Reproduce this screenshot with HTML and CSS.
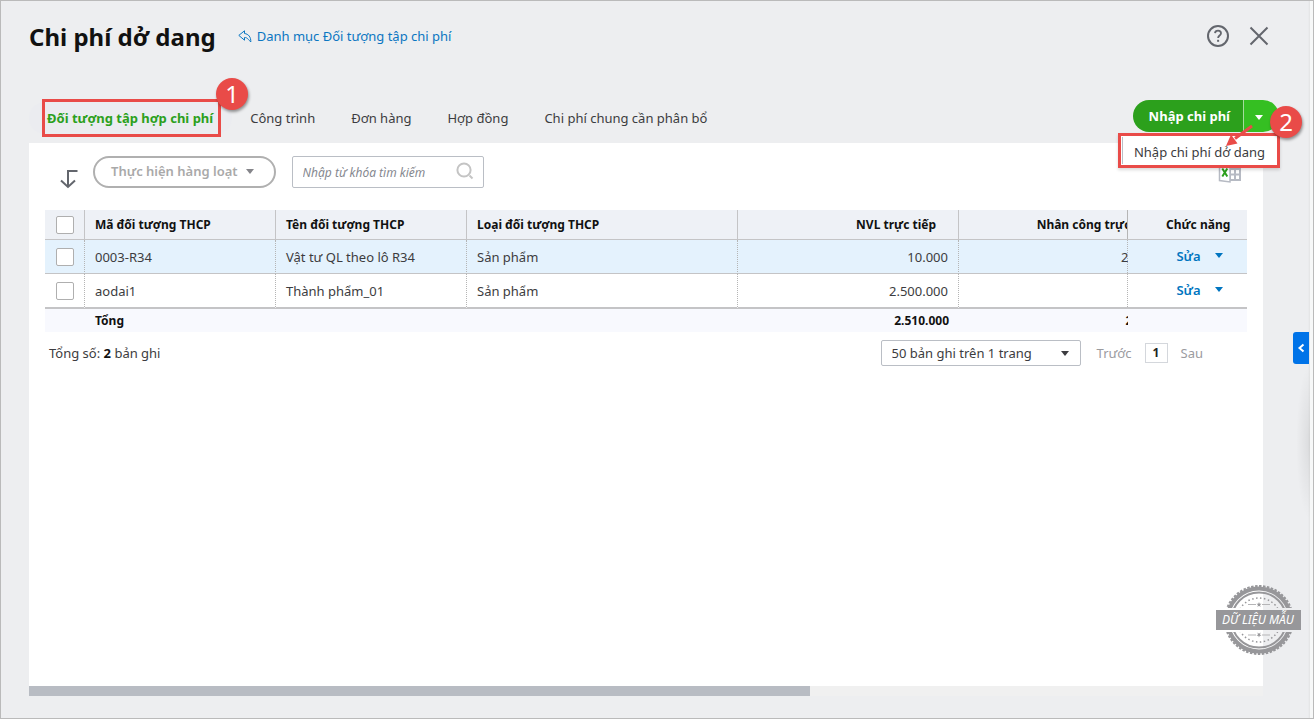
FILE: index.html
```html
<!DOCTYPE html>
<html lang="vi">
<head>
    <meta charset="UTF-8">
    <meta name="viewport" content="width=device-width, initial-scale=1.0">
    <title>Chi phí dở dang</title>
    <link rel="stylesheet" href="styles.css">
</head>
<body>
    <div class="window">
        <header class="page-header">
            <h1>Chi phí dở dang</h1>
            <a class="back-link" href="#">
                <svg width="14" height="13" viewBox="0 0 14 13" fill="none" stroke="currentColor" stroke-linejoin="round"><path d="M6.500 .8 .8 5.400l5.700 4.800V7.500c2 0 2.500.3 6.300 4.500C13 7 10.500 4 6.500 3.500z"/></svg>
                Danh mục Đối tượng tập chi phí
            </a>
            <div class="header-icons">
                <button class="icon-btn" aria-label="Trợ giúp">
                    <svg width="24" height="24" viewBox="0 0 24 24" fill="none" stroke="currentColor" stroke-width="2"><circle cx="12" cy="12" r="10"/><path d="M9 9.200c.2-1.700 1.400-2.500 3-2.500 1.800 0 3 1 3 2.600 0 2.200-2.900 2.300-2.900 4.600" stroke-width="1.800"/><path d="M11.100 15.800h2v2h-2z" fill="currentColor" stroke="none"/></svg>
                </button>
                <button class="icon-btn" aria-label="Đóng">
                    <svg width="24" height="24" viewBox="0 0 24 24" fill="none" stroke="currentColor" stroke-width="2"><path d="m3.500 3.500 17 17M20.500 3.500l-17 17"/></svg>
                </button>
            </div>
        </header>

        <div class="tab-bar">
            <nav class="tabs">
                <a class="tab active" href="#">Đối tượng tập hợp chi phí<span class="mark-tab"></span><span class="badge badge-one">1</span></a>
                <a class="tab" href="#">Công trình</a>
                <a class="tab" href="#">Đơn hàng</a>
                <a class="tab" href="#">Hợp đồng</a>
                <a class="tab" href="#">Chi phí chung cần phân bổ</a>
            </nav>
            <div class="split-button">
                <button class="main-btn">Nhập chi phí</button>
                <button class="drop-btn" aria-label="Mở danh sách"><span class="caret"></span></button>
                <div class="menu">
                    <button class="menu-item">Nhập chi phí dở dang</button>
                </div>
                <svg class="arrow" width="30" height="26" viewBox="0 0 30 26"><path d="M27 2 10 14.500" stroke="#e94b48" stroke-width="3"/><path d="m1 22 5-11.500 6.500 9z" fill="#e94b48"/></svg>
                <span class="badge badge-two">2</span>
            </div>
        </div>

        <main class="content">
            <div class="toolbar">
                <svg class="down-arrow" width="20" height="20" viewBox="0 0 20 20" fill="none" stroke="#63666d" stroke-width="2"><path d="M18.500 2H9v16M2 11.500l7 6.500 7-6.500"/></svg>
                <button class="batch-btn" disabled>Thực hiện hàng loạt <span class="caret"></span></button>
                <div class="search">
                    <input type="text" placeholder="Nhập từ khóa tìm kiếm" aria-label="Nhập từ khóa tìm kiếm">
                    <svg width="18" height="18" viewBox="0 0 18 18" fill="none" stroke="#c4c4c4" stroke-width="2"><circle cx="8" cy="8" r="6.600"/><path d="m13.500 13.500 3 3"/></svg>
                </div>
                <button class="excel-btn" aria-label="Xuất Excel">
                    <svg width="24" height="24" viewBox="0 0 24 24"><path d="M12 4h10v16H12z" fill="none" stroke="#b6bac3" stroke-width="2"/><path d="M12 9h10M12 14.500h10M17 4v16" stroke="#b6bac3" stroke-width="2"/><path d="M1.500 3.500 12 2v20L1.500 20.500z" fill="#fff" stroke="#b6bac3" stroke-width="1.500"/><path d="m4.300 8.500 5 8M9.300 8.500l-5 8" stroke="#2ca01c" stroke-width="2"/></svg>
                </button>
            </div>

            <div class="table-wrap">
                <table>
                    <colgroup>
                        <col class="col-check">
                        <col class="col-name">
                        <col class="col-name">
                        <col class="col-type">
                        <col class="col-money">
                        <col class="col-money">
                        <col class="col-action">
                    </colgroup>
                    <thead>
                        <tr>
                            <th class="check"><input type="checkbox" aria-label="Chọn tất cả"></th>
                            <th>Mã đối tượng THCP</th>
                            <th>Tên đối tượng THCP</th>
                            <th>Loại đối tượng THCP</th>
                            <th class="num">NVL trực tiếp</th>
                            <th class="num">Nhân công trực tiếp</th>
                            <th class="action">Chức năng</th>
                        </tr>
                    </thead>
                    <tbody>
                        <tr class="selected">
                            <td class="check"><input type="checkbox" aria-label="Chọn 0003-R34"></td>
                            <td>0003-R34</td>
                            <td>Vật tư QL theo lô R34</td>
                            <td>Sản phẩm</td>
                            <td class="num">10.000</td>
                            <td class="num">200.000</td>
                            <td class="action"><div class="row-actions"><button class="edit-btn">Sửa</button><button class="edit-btn" aria-label="Thêm"><span class="caret"></span></button></div></td>
                        </tr>
                        <tr>
                            <td class="check"><input type="checkbox" aria-label="Chọn aodai1"></td>
                            <td>aodai1</td>
                            <td>Thành phẩm_01</td>
                            <td>Sản phẩm</td>
                            <td class="num">2.500.000</td>
                            <td class="num"></td>
                            <td class="action"><div class="row-actions"><button class="edit-btn">Sửa</button><button class="edit-btn" aria-label="Thêm"><span class="caret"></span></button></div></td>
                        </tr>
                    </tbody>
                    <tfoot>
                        <tr>
                            <td></td>
                            <td>Tổng</td>
                            <td></td>
                            <td></td>
                            <td class="num">2.510.000</td>
                            <td class="num">200.000</td>
                            <td class="action"></td>
                        </tr>
                    </tfoot>
                </table>
            </div>

            <div class="pager">
                <span class="total">Tổng số: <b>2</b> bản ghi</span>
                <div class="page-size">
                    <select aria-label="Số bản ghi">
                        <option>50 bản ghi trên 1 trang</option>
                    </select>
                    <span class="caret"></span>
                </div>
                <button class="page-btn">Trước</button>
                <button class="page-btn current">1</button>
                <button class="page-btn">Sau</button>
            </div>
        </main>
        <div class="scrollbar"><div class="thumb"></div></div>

        <div class="side-shadow"></div>
        <button class="side-toggle" aria-label="Mở rộng">
            <svg width="8" height="10" viewBox="0 0 8 10" fill="none" stroke="#fff" stroke-width="2"><path d="M6.500 1.500 2.500 5l4 3.500"/></svg>
        </button>

        <svg class="stamp" width="86" height="72" viewBox="0 0 86 72" fill="none" stroke="#97979a">
            <clipPath id="rings"><path d="M0 0h86v24H0zM0 48h86v24H0z"/></clipPath>
            <g clip-path="url(#rings)">
                <circle cx="43" cy="36" r="34" stroke-width="2" stroke-dasharray="2.500 1.500"/>
                <circle cx="43" cy="36" r="31.500" stroke-width="4"/>
                <circle cx="43" cy="36" r="27.500" stroke-width="2"/>
                <circle cx="43" cy="36" r="22" stroke-width="1.500" stroke-dasharray="1.500 2.500"/>
            </g>
            <path d="M32 20.500h8M46 20.500h8M32 51h8M46 51h8" stroke="#b5b5b7"/>
            <path d="m43 18 .7 1.700h1.800L44 21l.6 1.900-1.600-1.100-1.600 1.100L42 21l-1.500-1.300h1.800zM43 53.500l.7-1.700h1.800L44 50.500l.6-1.900-1.600 1.100-1.600-1.100.6 1.900-1.500 1.300h1.800z" fill="#97979a" stroke="none"/>
            <path d="M0 26h85v20H0z" fill="#97979a" stroke="none"/>
            <text x="42" y="40" text-anchor="middle">DỮ LIỆU MẪU</text>
        </svg>
    </div>
</body>
</html>
```
FILE: styles.css
```css
* {
    box-sizing: border-box;
}

body {
    margin: 0;
    font-family: "Noto Sans", sans-serif;
    font-size: 13px;
    line-height: 18px;
    color: #3c3c40;
    background-color: #f5f5f6;
}

button,
input,
select {
    font: inherit;
    color: inherit;
}

button {
    padding: 0;
    border: none;
    background: none;
    cursor: pointer;
}

a {
    color: inherit;
    text-decoration: none;
}

svg {
    display: block;
}

.window {
    position: relative;
    display: flex;
    flex-direction: column;
    min-height: 100vh;
    padding: 2px 50px 22px 28px;
    border: 1px solid #bababa;
    background: linear-gradient(to left, #f7f8f8 3px, #e2e3e4 3px, #edeef0 5px);
}

.caret {
    display: block;
    border: 4px solid transparent;
    border-top: 5px solid currentColor;
    border-bottom: 0;
}

/* Header */
.page-header {
    display: flex;
    align-items: center;
    height: 66px;
}

h1 {
    margin: 0 22px 0 0;
    padding-top: 2px;
    font-size: 24px;
    font-weight: 700;
    line-height: 32px;
    color: #111;
}

.back-link {
    display: flex;
    align-items: center;
    gap: 5px;
    color: #0b76c2;
}

.header-icons {
    display: flex;
    gap: 17px;
    margin-left: auto;
    margin-right: -8px;
    color: #63666d;
}

/* Tabs */
.tab-bar {
    display: flex;
    align-items: center;
    justify-content: space-between;
    height: 74px;
    padding-top: 24px;
}

.tabs {
    display: flex;
}

.tab {
    position: relative;
    padding: 7px 18px;
    border-radius: 16px;
}

.tab.active {
    padding-right: 19px;
    background-color: #ebecf0;
    color: #2ca01c;
    font-weight: 700;
}

.split-button {
    position: relative;
    display: flex;
    margin-right: -16px;
    margin-bottom: 4px;
    color: #fff;
}

.main-btn {
    height: 32px;
    padding: 0 13px 0 16px;
    border-radius: 16px 0 0 16px;
    background-color: #2ca01c;
    font-weight: 700;
}

.drop-btn {
    display: flex;
    align-items: center;
    width: 36px;
    height: 32px;
    padding: 2px 0 0 11px;
    border-left: 1px solid #a4dc9d;
    border-radius: 0 16px 16px 0;
    background-color: #35bf22;
}

.menu {
    position: absolute;
    top: 33px;
    right: -1px;
    padding: 1px;
    border: 3px solid #e94b48;
    background-color: #fff;
    color: #3c3c40;
    box-shadow: 0 2px 3px rgba(0, 0, 0, 0.15);
}

.menu-item {
    height: 27px;
    padding: 2px 11px 0;
    border-left: 1px solid #babec5;
    white-space: nowrap;
}

.mark-tab {
    position: absolute;
    inset: -3px 11px -3px 13px;
    border: 3px solid #e94b48;
}

.badge {
    position: absolute;
    width: 32px;
    height: 32px;
    border-radius: 50%;
    background-color: #e94b48;
    color: #fff;
    font-size: 24px;
    font-weight: 400;
    line-height: 32px;
    text-align: center;
    box-shadow: 1px 2px 3px rgba(0, 0, 0, 0.4);
}

.badge-one {
    top: -24px;
    right: -16px;
}

.badge-two {
    top: 6px;
    right: -23px;
}

.arrow {
    position: absolute;
    top: 24px;
    right: 24px;
}

/* Content */
.content {
    flex: 1;
    padding: 13px 16px;
    background-color: #fff;
}

.toolbar {
    display: flex;
    align-items: center;
    height: 32px;
    margin-bottom: 22px;
}

.down-arrow {
    margin: 14px 14px 0;
}

.batch-btn {
    display: flex;
    align-items: center;
    gap: 8px;
    height: 32px;
    margin-right: 16px;
    padding: 0 20px 2px 16px;
    border: 2px solid #b0b0b0;
    border-radius: 16px;
    color: #a9a9a9;
    font-weight: 600;
}

.batch-btn .caret {
    color: #85858a;
}

.search {
    position: relative;
}

.search input {
    width: 192px;
    height: 32px;
    padding: 0 34px 0 10px;
    border: 1px solid #babec5;
    border-radius: 2px;
    font-size: 12px;
}

.search input::placeholder {
    color: #85888f;
    font-style: italic;
}

.search svg {
    position: absolute;
    top: 6px;
    right: 10px;
}

.excel-btn {
    margin-left: auto;
    margin-right: 5px;
}

/* Table */
.table-wrap {
    overflow: hidden;
}

table {
    width: 100%;
    min-width: 1254px;
    table-layout: fixed;
    border-collapse: separate;
    border-spacing: 0;
}

.col-check {
    width: 40px;
}

.col-name {
    width: 191px;
}

.col-money {
    width: 221px;
}

.col-action {
    width: 119px;
}

th,
td {
    height: 34px;
    padding: 0 10px;
    border-right: 1px dotted #b5b5b5;
    border-bottom: 1px solid #c4c4c6;
    background-color: #fff;
    text-align: left;
}

th {
    height: 30px;
    border-right: 1px solid #c4c4c6;
    background-color: #eef1f6;
    color: #111;
    font-size: 12px;
    font-weight: 700;
}

.selected td {
    background-color: #e4f2fd;
}

tbody tr:last-child td {
    height: 35px;
    border-bottom: 2px solid #c4c4c6;
}

tfoot td {
    height: 23px;
    border: none;
    background-color: #f8f9fe;
    color: #111;
    font-size: 12px;
    font-weight: 700;
}

.num {
    text-align: right;
}

th.num {
    padding-right: 22px;
}

.check {
    padding: 0;
    text-align: center;
}

.check input {
    display: block;
    width: 18px;
    height: 18px;
    margin: 0 auto;
    appearance: none;
    border: 1px solid #afafaf;
    border-radius: 2px;
    background-color: #fff;
}

.action {
    position: sticky;
    right: 0;
    border-right: none;
    text-align: center;
}

th.action {
    padding: 0 0 0 38px;
    text-align: left;
}

/* the fixed column draws its own left edge over the scrolled cells */
.action::before {
    content: "";
    position: absolute;
    top: 0;
    bottom: 0;
    left: -1px;
    border-left: 1px dotted #b5b5b5;
}

th.action::before {
    border-left-style: solid;
}

tfoot .action::before {
    border-color: transparent;
}

.row-actions {
    display: flex;
    align-items: center;
    justify-content: center;
    gap: 14px;
    padding: 0 0 2px 24px;
}

.edit-btn {
    color: #0075c0;
    font-weight: 600;
}

/* Pager */
.pager {
    display: flex;
    align-items: center;
    padding: 8px 44px 0 4px;
}

.total b {
    color: #111;
}

.page-size {
    position: relative;
    margin-left: auto;
    margin-right: 16px;
}

.page-size select {
    width: 200px;
    height: 26px;
    padding: 0 10px;
    appearance: none;
    border: 1px solid #babec5;
    border-radius: 2px;
    background-color: #fff;
}

.page-size .caret {
    position: absolute;
    top: 11px;
    right: 12px;
    pointer-events: none;
}

.page-btn {
    color: #9b9b9f;
}

.page-btn.current {
    width: 23px;
    height: 20px;
    margin: 0 13px;
    border: 1px solid #d4d7dc;
    color: #222;
    font-size: 12px;
    font-weight: 700;
}

.scrollbar {
    height: 10px;
    background-color: #f0f0f0;
}

.thumb {
    width: 63.3%;
    height: 10px;
    background-color: #b8bcc3;
}

/* Side handle */
.side-toggle {
    position: absolute;
    top: 331px;
    right: 4px;
    display: flex;
    align-items: center;
    justify-content: center;
    width: 16px;
    height: 32px;
    border-radius: 3px 0 0 3px;
    background-color: #0073e8;
}

.side-shadow {
    position: absolute;
    top: 363px;
    right: 3px;
    width: 14px;
    height: 156px;
    background: radial-gradient(ellipse at right, rgba(0, 0, 0, 0.08), transparent 70%);
}

.stamp {
    position: absolute;
    right: 11px;
    bottom: 62px;
}

.stamp text {
    fill: #fff;
    stroke: none;
    font-size: 12px;
    font-style: italic;
}
```
